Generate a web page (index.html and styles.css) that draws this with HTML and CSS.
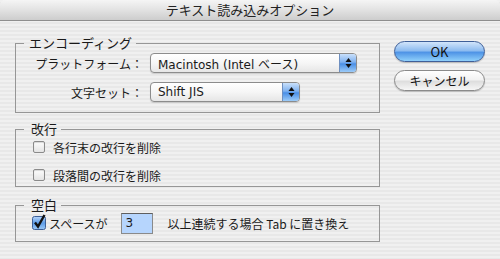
FILE: index.html
```html
<!DOCTYPE html>
<html lang="ja">

<head>
    <meta charset="UTF-8">
    <title>テキスト読み込みオプション</title>
    <link rel="stylesheet" href="styles.css">
</head>

<body>
    <div class="window">
        <header class="titlebar">テキスト読み込みオプション</header>

        <div class="dialog-body">
            <div class="groups">
                <fieldset class="group group-encoding">
                    <legend>エンコーディング</legend>
                    <div class="field">
                        <label class="field-label">プラットフォーム：</label>
                        <div class="popup popup-wide">
                            <span class="popup-text">Macintosh (Intel ベース)</span>
                            <span class="popup-arrows">
                                <svg width="7" height="12" viewBox="0 0 7 12"><path d="M3.5 1 L6.5 5 H0.5 Z M3.5 11 L6.5 7 H0.5 Z" fill="#111"/></svg>
                            </span>
                        </div>
                    </div>
                    <div class="field">
                        <label class="field-label">文字セット：</label>
                        <div class="popup popup-narrow">
                            <span class="popup-text">Shift JIS</span>
                            <span class="popup-arrows">
                                <svg width="7" height="12" viewBox="0 0 7 12"><path d="M3.5 1 L6.5 5 H0.5 Z M3.5 11 L6.5 7 H0.5 Z" fill="#111"/></svg>
                            </span>
                        </div>
                    </div>
                </fieldset>

                <fieldset class="group group-breaks">
                    <legend>改行</legend>
                    <div class="check-row">
                        <span class="checkbox"></span>
                        <span>各行末の改行を削除</span>
                    </div>
                    <div class="check-row">
                        <span class="checkbox"></span>
                        <span>段落間の改行を削除</span>
                    </div>
                </fieldset>

                <fieldset class="group group-spaces">
                    <legend>空白</legend>
                    <div class="check-row space-row">
                        <svg class="checkbox-on" width="15" height="16" viewBox="0 0 15 16">
                            <defs>
                                <linearGradient id="blue" x1="0" y1="0" x2="0" y2="1">
                                    <stop offset="0" stop-color="#b9d6fa"/>
                                    <stop offset="0.5" stop-color="#5c9ce8"/>
                                    <stop offset="1" stop-color="#9cc9f7"/>
                                </linearGradient>
                            </defs>
                            <rect x="0.5" y="2.5" width="13" height="13" rx="2" fill="url(#blue)" stroke="#3d5f96"/>
                            <path d="M3 8.5 L6 12.5 L12.5 1" fill="none" stroke="#111" stroke-width="2.4"/>
                        </svg>
                        <span>スペースが</span>
                        <span class="count-input">3</span>
                        <span>以上連続する場合 Tab に置き換え</span>
                    </div>
                </fieldset>
            </div>

            <div class="buttons">
                <button class="btn btn-default">OK</button>
                <button class="btn">キャンセル</button>
            </div>
        </div>
    </div>
</body>

</html>
```

FILE: styles.css
```css
body {
    margin: 0;
    font-family: "Noto Sans CJK JP", sans-serif;
    font-size: 12px;
    color: #1a1a1a;
}

.window {
    width: 500px;
    height: 259px;
    background: repeating-linear-gradient(180deg, #f0f0f0 0 2px, #e8e8e8 2px 4px);
    overflow: hidden;
}

.titlebar {
    height: 20px;
    line-height: 20px;
    border-bottom: 1px solid #8e8e8e;
    border-radius: 5px 5px 0 0;
    background: linear-gradient(#f5f5f5, #e2e2e2 50%, #cdcdcd);
    text-align: center;
    font-size: 13px;
    color: #222;
}

.dialog-body {
    display: flex;
    gap: 14px;
    padding: 15px 15px 0 15px;
}

.groups {
    width: 365px;
    display: flex;
    flex-direction: column;
}

.group {
    margin: 0;
    min-width: 0;
    border: 1px solid #969696;
    padding: 0;
}

.group legend {
    margin-left: 8px;
    padding: 0 4px 0 5px;
    font-size: 13px;
    line-height: 14px;
}

.group-breaks legend,
.group-spaces legend {
    padding-left: 7px;
}

.group-encoding {
    padding: 3px 0 10px 0;
}

.group-breaks {
    margin-top: 9px;
    padding: 2px 0 2px 0;
}

.group-spaces {
    margin-top: 11px;
    padding: 1px 0 7px 0;
}

/* エンコーディング */
.field {
    display: flex;
    align-items: center;
    height: 20px;
}

.field + .field {
    margin-top: 9px;
}

.field-label {
    width: 127px;
    margin-right: 7px;
    text-align: right;
}

.popup {
    box-sizing: border-box;
    height: 20px;
    display: flex;
    align-items: center;
    border: 1px solid #8c8c8c;
    border-radius: 4px;
    background: linear-gradient(#ffffff, #f6f6f6 50%, #e6e6e6);
    box-shadow: 0 1px 1px rgba(0, 0, 0, 0.15);
    overflow: hidden;
}

.popup-wide {
    width: 207px;
}

.popup-narrow {
    width: 150px;
}

.popup-text {
    flex: 1;
    padding-left: 7px;
    font-family: "DejaVu Sans", "Noto Sans CJK JP", sans-serif;
    font-size: 12px;
    white-space: nowrap;
}

.popup-arrows {
    width: 16px;
    height: 100%;
    display: flex;
    align-items: center;
    justify-content: center;
    border-left: 1px solid #6e8fc0;
    background: linear-gradient(#c9e0fb, #7fb1ef 45%, #4a8fe6 55%, #9ccbf8);
}

/* チェックボックス */
.check-row {
    display: flex;
    align-items: center;
    height: 18px;
    padding-left: 17px;
}

.check-row + .check-row {
    margin-top: 10px;
}

.checkbox {
    box-sizing: border-box;
    width: 12px;
    height: 12px;
    margin-right: 8px;
    border: 1px solid #8a8a8a;
    border-radius: 2px;
    background: linear-gradient(#fdfdfd, #e4e4e4);
    box-shadow: inset 0 1px 1px rgba(0, 0, 0, 0.15);
}

.space-row {
    height: 21px;
    padding-left: 16px;
}

.checkbox-on {
    margin-top: -3px;
    margin-right: 2px;
}

.count-input {
    box-sizing: border-box;
    width: 32px;
    height: 21px;
    margin: 0 15px 0 13px;
    padding-left: 4px;
    border: 1px solid #8a8a8a;
    border-top-color: #5e5e5e;
    background: #b6d5fd;
    font-family: "DejaVu Sans", sans-serif;
    font-size: 12px;
    line-height: 19px;
}

/* ボタン */
.buttons {
    width: 91px;
    display: flex;
    flex-direction: column;
    gap: 8px;
    padding-top: 5px;
}

.btn {
    height: 21px;
    padding: 0;
    border: 1px solid #8a8a8a;
    border-radius: 11px;
    background: linear-gradient(#ffffff, #f2f2f2 45%, #dedede 55%, #f6f6f6);
    box-shadow: 0 1px 1px rgba(0, 0, 0, 0.2);
    font-family: "Noto Sans CJK JP", sans-serif;
    font-size: 12px;
    color: #111;
}

.btn-default {
    border-color: #3f5f98;
    background: linear-gradient(#d2e5fb, #8ebcf0 45%, #4f94e6 55%, #8fd0fb);
    font-size: 13px;
}
```
